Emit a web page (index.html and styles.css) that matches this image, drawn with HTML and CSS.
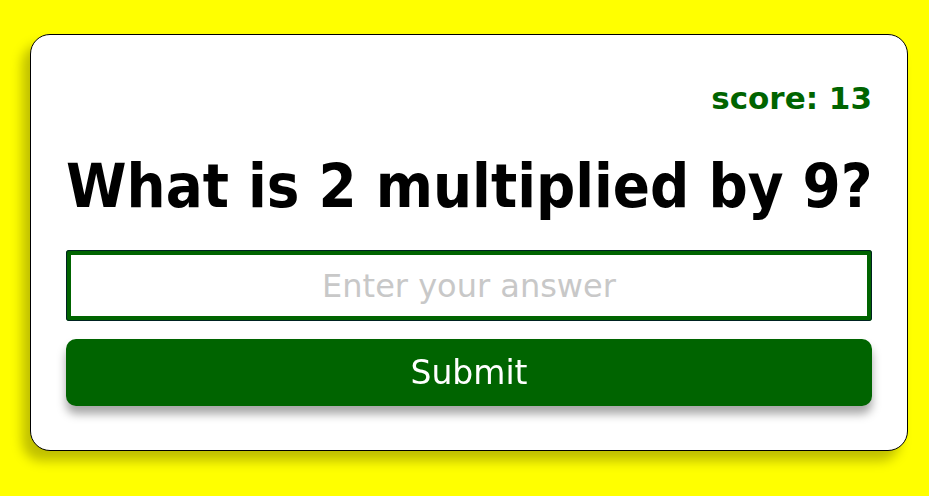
FILE: index.html
```html
<!DOCTYPE html>
<html>
<head>
<meta charset="utf-8">
<link rel="stylesheet" href="styles.css">
</head>
<body>
<div class="card">
  <div class="score">score: 13</div>
  <h1 class="question">What is 2 multiplied by 9?</h1>
  <input class="answer" type="text" placeholder="Enter your answer" autofocus>
  <button class="submit">Submit</button>
</div>
</body>
</html>
```
FILE: styles.css
```css
html, body {
  margin: 0;
  padding: 0;
  background: #ffff00;
  height: 100%;
}
body {
  padding: 34px 21px 0 30px;
  box-sizing: border-box;
  font-family: "DejaVu Sans", sans-serif;
}
.card {
  background: #fff;
  border: 1px solid #000;
  border-radius: 20px;
  box-shadow: -8px 10px 12px rgba(0,0,0,0.25);
  padding: 46px 35px 44px 35px;
  height: 417px;
  box-sizing: border-box;
  display: flex;
  flex-direction: column;
}
.score {
  text-align: right;
  font-weight: bold;
  font-size: 31px;
  color: #006400;
  line-height: 34px;
}
.question {
  margin: 36px 0 0 0;
  font-size: 61px;
  font-stretch: condensed;
  line-height: 70px;
  text-align: center;
  font-weight: bold;
  color: #000;
  white-space: nowrap;
}
.answer {
  margin-top: 29px;
  height: 71px;
  box-sizing: border-box;
  border: 5px solid #006400;
  outline: 1px solid #022;
  outline-offset: -1px;
  border-radius: 3px;
  font-family: "DejaVu Sans", sans-serif;
  font-size: 32px;
  text-align: center;
  color: #000;
  caret-color: #004000;
  padding: 0;
}
.answer::placeholder {
  color: #c8c8c8;
}
.submit {
  margin-top: 18px;
  height: 67px;
  background: #006400;
  color: #fff;
  border: none;
  border-radius: 10px;
  font-family: "DejaVu Sans", sans-serif;
  font-size: 33px;
  box-shadow: 0 8px 10px rgba(0,0,0,0.35);
}
```
